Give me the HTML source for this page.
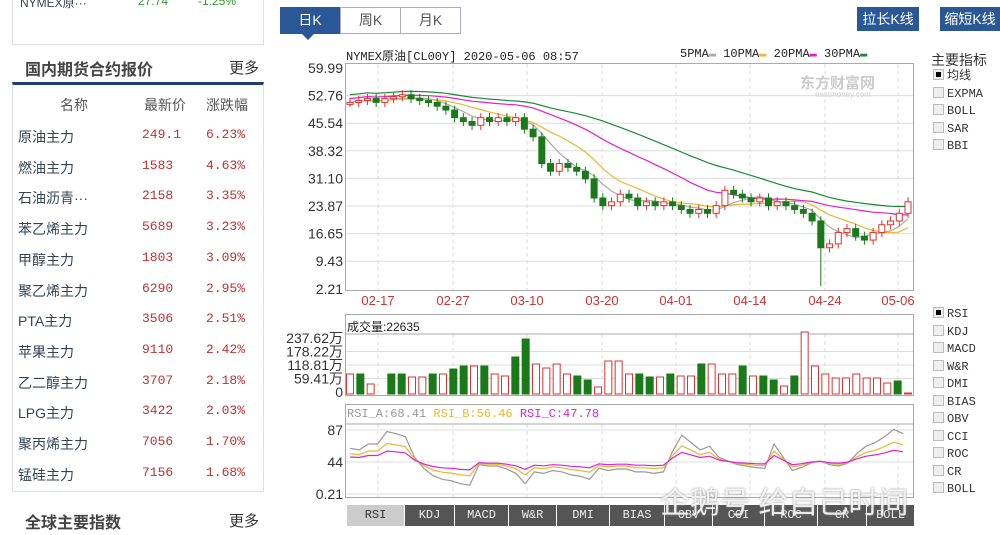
<!DOCTYPE html>
<html><head><meta charset="utf-8">
<style>
*{margin:0;padding:0;box-sizing:border-box}
body{width:1000px;height:535px;background:#fff;font-family:"Liberation Sans","Noto Sans CJK SC",sans-serif;position:relative;overflow:hidden;color:#333}
.a{position:absolute}
.m{font-family:"Liberation Mono","Noto Sans CJK SC",monospace}
.row{position:absolute;left:18px;width:240px;height:20px;font-size:14px}
.row span{position:absolute}
.tab{position:absolute;top:7px;height:27px;border:1px solid #aac;font-size:14px;text-align:center;line-height:25px;color:#555;background:#fff}
.btn{position:absolute;top:7px;height:24px;background:#2a5795;color:#fff;font-size:14px;line-height:24px;text-align:center}
.chk{font-size:12px;color:#333;line-height:17.5px}
.chk div:before{content:"";display:inline-block;width:9px;height:9px;border:1px solid #bbb;background:#eee;margin-right:3px;vertical-align:-1px}
.chk div.on:before{background:#000;box-shadow:inset 0 0 0 2px #eee}
.ind{position:absolute;top:505px;height:21px;background:#555;color:#eee;font-size:12px;text-align:center;line-height:21px;border-right:1px solid #fff}
</style></head><body>
<!-- left panel -->
<div class="a" style="left:12px;top:0;width:252px;height:45px;border:1px solid #dde;border-top:none"></div>
<div class="a" style="left:20px;top:-6px;font-size:12px;color:#345">NYMEX原···</div>
<div class="a" style="left:138px;top:-6px;font-size:12px;color:#393">27.74</div>
<div class="a" style="left:198px;top:-6px;font-size:12px;color:#393">-1.25%</div>
<div class="a" style="left:25px;top:56px;font-size:16px;font-weight:bold;color:#444">国内期货合约报价</div>
<div class="a" style="left:229px;top:57px;font-size:15px;color:#333">更多</div>
<div class="a" style="left:12px;top:82px;width:252px;height:410px;border:1px solid #dde;border-top:3px solid #1d3f6d"></div>
<div class="row" style="top:95px;color:#555"><span style="left:42px">名称</span><span style="left:126px">最新价</span><span style="left:188px">涨跌幅</span></div>
<div id="rows"></div>
<div class="a" style="left:25px;top:509px;font-size:16px;font-weight:bold;color:#444">全球主要指数</div>
<div class="a" style="left:229px;top:510px;font-size:15px;color:#333">更多</div>

<!-- tabs -->
<div class="tab" style="left:280px;width:60px;background:#2a5795;color:#fff;border-color:#2a5795">日K</div>
<div class="a" style="left:302px;top:34px;border:6px solid transparent;border-top-color:#2a5795"></div>
<div class="tab" style="left:340px;width:61px">周K</div>
<div class="tab" style="left:400px;width:61px">月K</div>
<div class="btn" style="left:857px;width:62px">拉长K线</div>
<div class="btn" style="left:940px;width:60px">缩短K线</div>

<div class="a m" style="left:346px;top:47px;font-size:12px;color:#222">NYMEX原油[CL00Y] 2020-05-06 08:57</div>
<div class="a m" style="left:680px;top:47px;font-size:12px;color:#222">5PMA<span style="color:#aaa">▬</span> 10PMA<span style="color:#e8b830">▬</span> 20PMA<span style="color:#e020d0">▬</span> 30PMA<span style="color:#1a8a3a">▬</span></div>
<div class="a" style="left:931px;top:50px;font-size:14px;color:#333">主要指标</div>
<div class="a chk m" style="left:933px;top:68px"><div class="on">均线</div><div>EXPMA</div><div>BOLL</div><div>SAR</div><div>BBI</div></div>
<div class="a chk m" style="left:933px;top:306px"><div class="on">RSI</div><div>KDJ</div><div>MACD</div><div>W&amp;R</div><div>DMI</div><div>BIAS</div><div>OBV</div><div>CCI</div><div>ROC</div><div>CR</div><div>BOLL</div></div>

<div class="a" style="left:800px;top:72px;font-size:15px;font-weight:bold;color:#ccc">东方财富网</div>
<div class="a" style="left:815px;top:90px;font-size:8px;color:#ccc">eastmoney.com</div>

<svg class="a" style="left:0;top:0" width="1000" height="535" id="s"></svg>

<div class="a" style="left:347px;top:318px;font-size:12px;color:#222">成交量:22635</div>
<div class="a m" style="left:347px;top:407px;font-size:12px;color:#999">RSI_A:68.41 <span style="color:#e8b830">RSI_B:56.46</span> <span style="color:#e020d0">RSI_C:47.78</span></div>

<div id="inds"></div>
<div class="a" style="left:660px;top:478px;font-size:30px;color:rgba(255,255,255,.85);text-shadow:0 0 2px #888">企鹅号 给自己时间</div>

<script>
var rows=[["原油主力","249.1","6.23%"],["燃油主力","1583","4.63%"],["石油沥青···","2158","3.35%"],["苯乙烯主力","5689","3.23%"],["甲醇主力","1803","3.09%"],["聚乙烯主力","6290","2.95%"],["PTA主力","3506","2.51%"],["苹果主力","9110","2.42%"],["乙二醇主力","3707","2.18%"],["LPG主力","3422","2.03%"],["聚丙烯主力","7056","1.70%"],["锰硅主力","7156","1.68%"]];
var h="";rows.forEach(function(r,i){var t=127+i*30.7;h+='<div class="row" style="top:'+t+'px"><span style="left:0;color:#345">'+r[0]+'</span><span class="m" style="left:124px;color:#b33;font-size:13px">'+r[1]+'</span><span class="m" style="left:188px;color:#b33;font-size:13px">'+r[2]+'</span></div>'});
document.getElementById("rows").innerHTML=h;
var names=["RSI","KDJ","MACD","W&R","DMI","BIAS","OBV","CCI","ROC","CR","BOLL"],xs=[347,405,455,509,557,610,665,713,765,818,867,915];
h="";names.forEach(function(n,i){h+='<div class="ind m" style="left:'+xs[i]+'px;width:'+(xs[i+1]-xs[i])+'px;'+(i==0?'background:#ccc;color:#333':'')+'">'+n.replace("&","&amp;")+'</div>'});
document.getElementById("inds").innerHTML=h;
var s="";
function L(x1,y1,x2,y2,c,d){s+='<line x1="'+x1+'" y1="'+y1+'" x2="'+x2+'" y2="'+y2+'" stroke="'+c+'" '+(d?'stroke-dasharray="4,3"':'')+'/>'}
function T(x,y,t,c,a,f){s+='<text x="'+x+'" y="'+y+'" fill="'+c+'" font-size="'+(f||14)+'" text-anchor="'+(a||"end")+'" font-family="Liberation Sans,Noto Sans CJK SC,sans-serif">'+t+'</text>'}
// main box
s+='<rect x="345.5" y="63.5" width="568" height="227" fill="none" stroke="#aaa"/>';
var labs=["59.99","52.76","45.54","38.32","31.10","23.87","16.65","9.43","2.21"];
for(var i=0;i<9;i++){var y=68+i*27.6;if(i>0&&i<8)L(346,y,913,y,"#ddd");T(343,y+5,labs[i],"#333")}
var vx=[378,453,527,602,676,750,825,898],dl=["02-17","02-27","03-10","03-20","04-01","04-14","04-24","05-06"];
vx.forEach(function(x,i){L(x,64,x,290,"#ddd",1);L(x,334,x,395,"#ddd",1);L(x,424,x,497,"#ddd",1);T(x,305,dl[i],"#c33","middle",13)});
// price data
var P=[51,51.5,52,51,52,52.5,53,52,51.5,51,50,49,47,46,45,47,46,47,46,47,44,42,35,33,35,34,33,31,26,24,25,27,26,24,25,24,25,24,23,22,23,22,24,28,27,26,25,26,24,25,24,23,22,20,13,14,17,18,16,15,17,19,20,22,25];
var n=P.length,x0=350,dx=(908-350)/(n-1);
function Y(p){return 289-(p-2.21)/(59.99-2.21)*221}
function ma(k){var r=[];for(var i=0;i<n;i++){var a=0,c=0;for(var j=Math.max(0,i-k+1);j<=i;j++){a+=P[j];c++}r.push(a/c+(k==30?2:k==20?1:0))}return r}
[[5,"#aaa"],[10,"#e8b830"],[20,"#e020d0"],[30,"#1a8a3a"]].forEach(function(m){var a=ma(m[0]),d="";a.forEach(function(v,i){d+=(i?"L":"M")+(x0+i*dx).toFixed(1)+","+Y(v).toFixed(1)});s+='<path d="'+d+'" fill="none" stroke="'+m[1]+'" stroke-width="1.2"/>'});
for(var i=0;i<n;i++){var o=i?P[i-1]:P[0],c=P[i],up=c>=o,x=x0+i*dx,hi=Math.max(o,c)+1.2,lo=Math.min(o,c)-1.2;if(i==54)lo=3;var col=up?"#d33":"#1a7a1a";L(x,Y(hi),x,Y(lo),col);var y1=Y(Math.max(o,c)),hh=Math.max(2,Y(Math.min(o,c))-y1);s+='<rect x="'+(x-3)+'" y="'+y1+'" width="6" height="'+hh+'" fill="'+(up?"#fff":col)+'" stroke="'+col+'"/>'}
// volume
s+='<rect x="345.5" y="314.5" width="568" height="81" fill="none" stroke="#aaa"/>';L(346,334,913,334,"#aaa");
var vl=["237.62万","178.22万","118.81万","59.41万","0"];for(i=0;i<5;i++){var y=338+i*13.5;if(i>0&&i<4)L(346,y,913,y,"#ddd");T(343,y+5,vl[i],"#333")}
var V=[20,20,10,0,20,20,17,17,20,20,25,28,28,28,20,18,37,55,30,26,30,20,18,14,7,33,33,20,20,17,17,20,18,18,30,30,20,20,28,18,18,14,8,18,62,28,20,16,16,20,16,16,11,13,1];
var vdx=(908-350)/(V.length-1);
V.forEach(function(v,i){var x=350+i*vdx,up=(i*7+3)%3==0||[2,3,7,14,19,20,25,26,27,32,33,35,36,37,44,46,47,48,49,50,51,52].indexOf(i)>=0,col=up?"#d33":"#1a7a1a";s+='<rect x="'+(x-3.5)+'" y="'+(394-v)+'" width="7" height="'+v+'" fill="'+(up?"#fff":col)+'" stroke="'+col+'"/>'});
// rsi
s+='<rect x="345.5" y="404.5" width="568" height="93" fill="none" stroke="#aaa"/>';L(346,424,913,424,"#aaa");
[["87",430],["44",462],["0.21",494]].forEach(function(a){L(346,a[1],913,a[1],"#ddd");T(343,a[1]+5,a[0],"#333")});
var R=[62,60,68,68,85,82,78,50,35,25,20,18,14,12,40,38,38,34,28,14,30,28,32,30,26,24,20,35,32,34,34,30,30,28,30,58,80,70,60,65,50,45,40,38,36,35,68,50,32,36,42,45,40,38,42,55,65,70,78,88,82];
var rn=R.length,rdx=(903-350)/(rn-1);
function RY(v){return 494-v/87*64}
[[1,"#999",0],[0.6,"#e8b830",17],[0.35,"#e020d0",28]].forEach(function(m){var d="";R.forEach(function(v,i){var w=v*m[0]+(1-m[0])*44+(m[2]?0:0);d+=(i?"L":"M")+(350+i*rdx).toFixed(1)+","+RY(w).toFixed(1)});s+='<path d="'+d+'" fill="none" stroke="'+m[1]+'" stroke-width="1.2"/>'});
document.getElementById("s").innerHTML=s;
</script>
</body></html>
